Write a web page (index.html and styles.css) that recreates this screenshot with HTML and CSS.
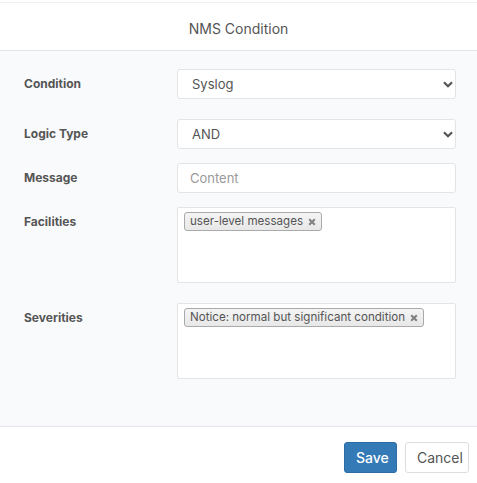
FILE: index.html
```html
<!DOCTYPE html>
<html>
<head>
<meta charset="utf-8">
<link rel="stylesheet" href="styles.css">
</head>
<body>
<div class="modal">
  <div class="modal-header">
    <h4 class="modal-title">NMS Condition</h4>
  </div>
  <div class="modal-body">
    <div class="form-row row-spaced">
      <label class="control-label">Condition</label>
      <div class="control select-wrap">
        <select class="form-control"><option>Syslog</option></select>
        <svg class="chevron" width="10" height="7" viewBox="0 0 10 7"><path d="M1 1.2 L5 5.2 L9 1.2" fill="none" stroke="#555" stroke-width="2.2"/></svg>
      </div>
    </div>
    <div class="form-row">
      <label class="control-label">Logic Type</label>
      <div class="control select-wrap">
        <select class="form-control"><option>AND</option></select>
        <svg class="chevron" width="10" height="7" viewBox="0 0 10 7"><path d="M1 1.2 L5 5.2 L9 1.2" fill="none" stroke="#555" stroke-width="2.2"/></svg>
      </div>
    </div>
    <div class="form-row">
      <label class="control-label">Message</label>
      <div class="control">
        <input class="form-control input" placeholder="Content">
      </div>
    </div>
    <div class="form-row row-spaced">
      <label class="control-label">Facilities</label>
      <div class="control">
        <div class="multi">
          <span class="tag">user-level messages <svg class="tag-x" width="8" height="8" viewBox="0 0 8 8"><path d="M1.2 1.2 L6.8 6.8 M6.8 1.2 L1.2 6.8" stroke="#808080" stroke-width="2"/></svg></span>
        </div>
      </div>
    </div>
    <div class="form-row">
      <label class="control-label">Severities</label>
      <div class="control">
        <div class="multi">
          <span class="tag">Notice: normal but significant condition <svg class="tag-x" width="8" height="8" viewBox="0 0 8 8"><path d="M1.2 1.2 L6.8 6.8 M6.8 1.2 L1.2 6.8" stroke="#808080" stroke-width="2"/></svg></span>
        </div>
      </div>
    </div>
  </div>
  <div class="modal-footer">
    <button class="btn btn-primary">Save</button>
    <button class="btn btn-default">Cancel</button>
  </div>
</div>
</body>
</html>
```
FILE: styles.css
```css
* { box-sizing: border-box; }
html, body { margin: 0; padding: 0; background: #fff; }
body {
  font-family: Inter, "Liberation Sans", sans-serif;
  color: #555;
  width: 477px;
  height: 483px;
  overflow: hidden;
}
.modal {
  padding-top: 2px;
}
.modal-header {
  border-top: 1px solid #f0f1f3;
  border-bottom: 1px solid #e3e5e8;
  height: 49px;
  display: flex;
  align-items: center;
  justify-content: center;
}
.modal-title {
  margin: 0;
  font-size: 14px;
  font-weight: 400;
  color: #555;
  padding-top: 3px;
}
.modal-body {
  background: #f9fafc;
  padding: 18px 21px 47px 24px;
  display: flex;
  flex-direction: column;
  gap: 14px;
  border-bottom: 1px solid #e3e5e8;
}
.form-row {
  display: flex;
  align-items: flex-start;
}
.row-spaced { margin-bottom: 6px; }
.control-label {
  width: 153px;
  flex: none;
  font-size: 12px;
  font-weight: 700;
  color: #555;
  padding-top: 6px;
  line-height: 17px;
}
.control { flex: 1; position: relative; }
.form-control {
  display: block;
  width: 100%;
  height: 30px;
  border: 1px solid #e2e4e7;
  border-radius: 3px;
  background: #fff;
  font-family: Inter, "Liberation Sans", sans-serif;
  font-size: 13px;
  color: #555;
  padding: 0 12px;
  outline: none;
}
select.form-control {
  appearance: none;
  -webkit-appearance: none;
  padding-left: 14px;
}
.input::placeholder { color: #999; }
.chevron {
  position: absolute;
  right: 3px;
  top: 12px;
  pointer-events: none;
}
.multi {
  height: 76px;
  background: #fff;
  border: 1px solid #e2e4e7;
  border-radius: 2px;
  padding: 4px 6px;
  display: flex;
  align-items: flex-start;
}
.tag {
  display: flex;
  align-items: center;
  height: 19px;
  border: 1px solid #aaa;
  border-radius: 3px;
  background: linear-gradient(#f4f4f4, #e8e8e8);
  padding: 0 5px 1px;
  font-size: 11.6px;
  line-height: 14px;
  color: #555;
  gap: 5px;
}
.tag-x { flex: none; margin-top: 1px; }
.modal-footer {
  display: flex;
  justify-content: flex-end;
  gap: 8px;
  padding: 15px 8px 0 0;
}
.btn {
  height: 31px;
  border-radius: 3px;
  font-family: Inter, "Liberation Sans", sans-serif;
  font-size: 14px;
  padding: 0 11px 1px;
  cursor: pointer;
}
.btn-primary {
  background: #337ab7;
  border: 1px solid #2e6da4;
  color: #fff;
  font-weight: 500;
  width: 53px;
}
.btn-default {
  background: #fff;
  border: 1px solid #ddd;
  color: #555;
  width: 64px;
}
```
